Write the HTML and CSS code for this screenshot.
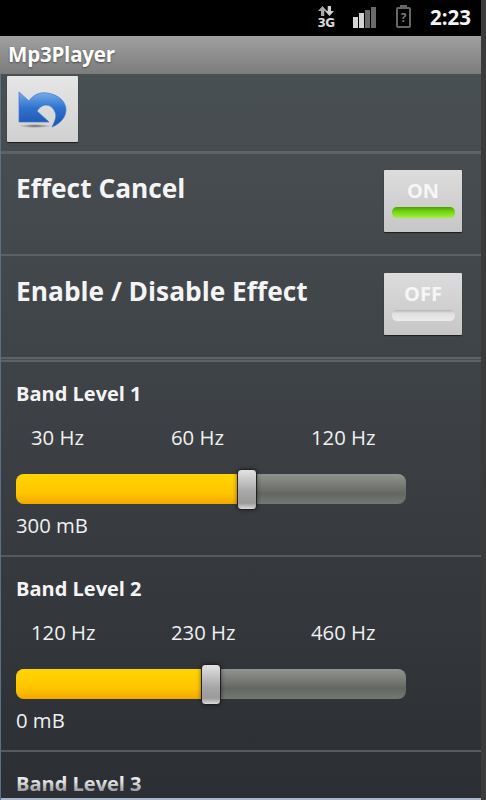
FILE: index.html
```html
<!DOCTYPE html>
<html>
<head>
    <title>Mp3Player</title>
    <link rel="stylesheet" href="styles.css">
</head>
<body>
    <div class="screen">
        <!-- Status bar -->
        <div class="status-bar">
            <div class="net">
                <svg width="16" height="10" viewBox="0 0 16 10">
                    <path d="M4.500 0 L9 5 H6.300 V10 H3 V5 H0 Z" fill="#a8a8a8"/>
                    <path d="M11.500 10 L7 5 H9.700 V0 H13 V5 H16 Z" fill="#d0d0d0"/>
                </svg>
                <span class="net-label">3G</span>
            </div>
            <svg class="signal" width="23" height="21" viewBox="0 0 23 21">
                <rect x="0" y="10" width="5" height="11" fill="#d4d4d4"/>
                <rect x="6" y="6" width="5" height="15" fill="#d4d4d4"/>
                <rect x="12" y="3" width="5" height="18" fill="#6a6a6a"/>
                <rect x="18" y="0" width="5" height="21" fill="#6a6a6a"/>
            </svg>
            <div class="battery"><span>?</span></div>
            <span class="clock">2:23</span>
        </div>

        <div class="title-bar">Mp3Player</div>

        <div class="content">
            <div class="toolbar">
                <button class="back-btn">
                    <svg width="50" height="50" viewBox="0 0 50 50">
                        <defs>
                            <linearGradient id="arrow" x1="0" y1="0" x2="0" y2="1">
                                <stop offset="0" stop-color="#7aaee8"/>
                                <stop offset="0.45" stop-color="#2f73cf"/>
                                <stop offset="1" stop-color="#1d52ad"/>
                            </linearGradient>
                            <radialGradient id="shade">
                                <stop offset="0" stop-color="#444" stop-opacity="0.85"/>
                                <stop offset="1" stop-color="#777" stop-opacity="0"/>
                            </radialGradient>
                        </defs>
                        <ellipse cx="17" cy="42" rx="17" ry="2" fill="url(#shade)"/>
                        <path d="M1 8 L11 17 C15 11 21 8.500 27 8.800 C38 9.500 48 16 48 26 C48 33 42 40 34 43 C37 37 39 32 37 28 C35.500 24 32 20.500 27 21 C24 21.300 21 24 19 27 L31 38 H1 Z" fill="url(#arrow)" stroke="#3d7ad0" stroke-width="0.700"/>
                    </svg>
                </button>
            </div>

            <div class="toggle-row first">
                <div class="toggle-label">Effect Cancel</div>
                <button class="toggle"><span class="toggle-text">ON</span><span class="lamp lamp-on"></span></button>
            </div>

            <div class="toggle-row">
                <div class="toggle-label">Enable / Disable Effect</div>
                <button class="toggle"><span class="toggle-text">OFF</span><span class="lamp"></span></button>
            </div>

            <div class="double-line"></div>

            <div class="band">
                <h3>Band Level 1</h3>
                <div class="freqs"><span>30 Hz</span><span>60 Hz</span><span>120 Hz</span></div>
                <div class="slider">
                    <div class="slider-fill" style="width: 232px"></div>
                    <div class="slider-thumb" style="left: 221px"></div>
                </div>
                <div class="value">300 mB</div>
            </div>

            <div class="band">
                <h3>Band Level 2</h3>
                <div class="freqs"><span>120 Hz</span><span>230 Hz</span><span>460 Hz</span></div>
                <div class="slider">
                    <div class="slider-fill" style="width: 195px"></div>
                    <div class="slider-thumb" style="left: 185px"></div>
                </div>
                <div class="value">0 mB</div>
            </div>

            <div class="band">
                <h3>Band Level 3</h3>
            </div>
            <div class="fade"></div>
        </div>
    </div>
</body>
</html>
```

FILE: styles.css
```css
* {
    margin: 0;
    padding: 0;
    box-sizing: border-box;
}
body {
    background: #3b3b3b;
    font-family: "Open Sans", "Noto Sans", sans-serif;
    color: #fff;
    width: 486px;
    height: 800px;
    overflow: hidden;
}
.screen {
    width: 481px;
    height: 800px;
    display: flex;
    flex-direction: column;
}

/* Status bar */
.status-bar {
    height: 36px;
    background: #000;
    display: flex;
    align-items: flex-start;
    flex: none;
}
.net {
    margin: 6px 0 0 318px;
    width: 16px;
    display: flex;
    flex-direction: column;
    align-items: center;
}
.net-label {
    margin-top: 1px;
    font-family: "DejaVu Sans", sans-serif;
    font-size: 12px;
    line-height: 12px;
    font-weight: 700;
    letter-spacing: -0.5px;
    color: #d8d8d8;
}
.signal {
    margin: 7px 0 0 19px;
}
.battery {
    position: relative;
    margin: 7px 0 0 20px;
    width: 15px;
    height: 21px;
    border: 2px solid #666;
    border-radius: 2px;
    text-align: center;
    font-size: 12px;
    line-height: 17px;
    font-weight: 700;
    color: #777;
}
.battery::before {
    content: "";
    position: absolute;
    top: -4px;
    left: 2px;
    width: 7px;
    height: 2px;
    background: #666;
}
.clock {
    margin: 3px 0 0 19px;
    font-size: 20.500px;
    line-height: 28px;
    font-weight: 700;
    color: #f4f4f4;
}

/* Title */
.title-bar {
    height: 38px;
    flex: none;
    background: linear-gradient(#a0a0a0, #7c7c7c);
    font-size: 20.500px;
    font-weight: 700;
    line-height: 37px;
    padding-left: 8px;
    letter-spacing: -0.2px;
    text-shadow: 0 1px 2px #4a4a4a;
}

/* Content */
.content {
    flex: 1;
    position: relative;
    overflow: hidden;
    background: linear-gradient(#495053, #3c4044 50%, #2b2f34);
    border-left: 1px solid #5a6f88;
}
.toolbar {
    height: 80px;
    padding: 2px 0 0 6px;
    border-bottom: 3px solid #5d6264;
}
.back-btn {
    width: 71px;
    height: 66px;
    border: none;
    border-radius: 1px;
    background: linear-gradient(#e6e6e6, #d0d0d0);
    box-shadow: 0 1px 1px #1c1c1c;
    display: flex;
    align-items: center;
    justify-content: center;
}
.toggle-row {
    height: 103px;
    display: flex;
    justify-content: space-between;
    padding: 17px 19px 0 15px;
    border-bottom: 2px solid #5d6264;
}
.toggle-row.first {
    height: 102px;
    padding-top: 16px;
}
.toggle-label {
    font-size: 26.300px;
    font-weight: 700;
    line-height: 36px;
    color: #f4f4f4;
}
.toggle {
    width: 78px;
    height: 62px;
    border: none;
    border-radius: 1px;
    background: linear-gradient(#dcdcdc, #c6c6c6);
    box-shadow: 0 1px 1px #1c1c1c;
    display: flex;
    flex-direction: column;
    align-items: center;
    font-family: inherit;
}
.toggle-text {
    margin-top: 8px;
    font-size: 20px;
    line-height: 26px;
    font-weight: 700;
    color: #f6f6f6;
}
.lamp {
    margin-top: 3px;
    width: 63px;
    height: 11px;
    border-radius: 5px;
    background: linear-gradient(#b4b4b4, #e0e0e0 30%, #ececec);
}
.lamp-on {
    background: linear-gradient(#4e9e04, #6fd40c 40%, #a4ee4a);
}
.double-line {
    height: 3px;
    border-top: 1px solid #484c4f;
    border-bottom: 2px solid #5d6264;
}

/* Bands */
.band {
    height: 195px;
    padding: 0 0 0 15px;
    border-bottom: 2px solid #565a5d;
}
.band h3 {
    padding-top: 19px;
    font-size: 20px;
    line-height: 26px;
    font-weight: 700;
    color: #f4f4f4;
}
.freqs {
    display: flex;
    margin-top: 17px;
    padding-left: 15px;
    font-size: 20.300px;
    line-height: 26px;
    color: #f0f0f0;
}
.freqs span {
    width: 140px;
}
.slider {
    position: relative;
    width: 390px;
    height: 30px;
    margin-top: 24px;
    border-radius: 8px;
    background: linear-gradient(#92958f, #636661 65%, #747772);
}
.slider-fill {
    height: 30px;
    border-radius: 8px 0 0 8px;
    background: linear-gradient(#ffd500, #ffc400 65%, #f2a800);
}
.slider-thumb {
    position: absolute;
    top: -5px;
    width: 20px;
    height: 41px;
    border: 1px solid #1e2022;
    border-radius: 4px;
    background: linear-gradient(#e2e2e2, #a8a8a8 55%, #9a9a9a 85%, #dcdcdc);
    box-shadow: 0 0 4px rgba(0, 0, 0, 0.5);
}
.value {
    margin-top: 8px;
    font-size: 20.300px;
    line-height: 26px;
    color: #f0f0f0;
}
.fade {
    position: absolute;
    left: 0;
    right: 0;
    bottom: 0;
    height: 26px;
    background: linear-gradient(rgba(43, 47, 52, 0), rgba(43, 47, 52, 0.1) 30%, rgba(43, 47, 52, 0.7) 92%, #a9b7cc 92%);
}
```
